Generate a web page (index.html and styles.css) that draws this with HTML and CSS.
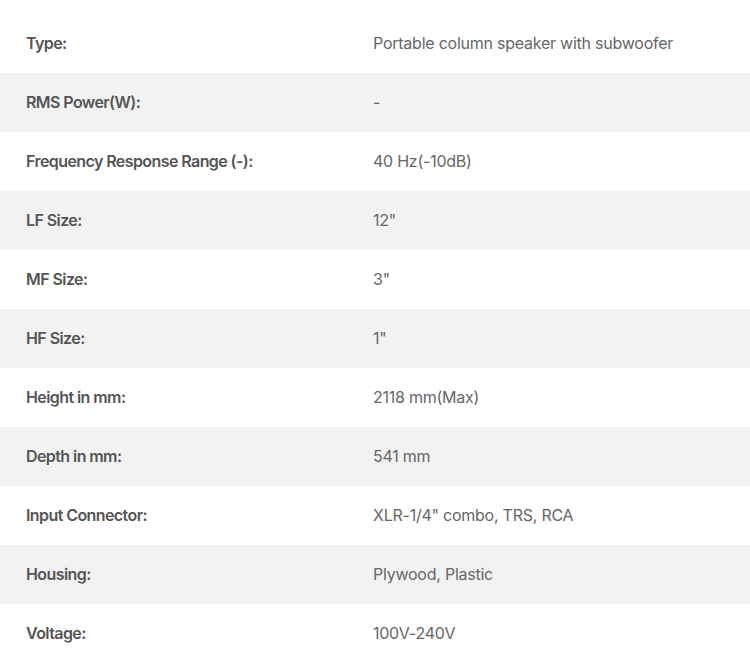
FILE: index.html
```html
<!DOCTYPE html>
<html>
<head>
<meta charset="utf-8">
<link rel="stylesheet" href="styles.css">
</head>
<body>
<table class="specs">
  <tbody>
    <tr><td class="label">Type:</td><td class="value">Portable column speaker with subwoofer</td></tr>
    <tr><td class="label">RMS Power(W):</td><td class="value">-</td></tr>
    <tr><td class="label">Frequency Response Range (-):</td><td class="value">40 Hz(-10dB)</td></tr>
    <tr><td class="label">LF Size:</td><td class="value">12"</td></tr>
    <tr><td class="label">MF Size:</td><td class="value">3"</td></tr>
    <tr><td class="label">HF Size:</td><td class="value">1"</td></tr>
    <tr><td class="label">Height in mm:</td><td class="value">2118 mm(Max)</td></tr>
    <tr><td class="label">Depth in mm:</td><td class="value">541 mm</td></tr>
    <tr><td class="label">Input Connector:</td><td class="value">XLR-1/4" combo, TRS, RCA</td></tr>
    <tr><td class="label">Housing:</td><td class="value">Plywood, Plastic</td></tr>
    <tr><td class="label">Voltage:</td><td class="value">100V-240V</td></tr>
  </tbody>
</table>
</body>
</html>
```

FILE: styles.css
```css
html, body {
  margin: 0;
  padding: 0;
  background: #fff;
}
body {
  padding-top: 14px;
  font-family: Inter, "Noto Sans", sans-serif;
  font-size: 16px;
}
.specs {
  width: 100%;
  border-collapse: collapse;
}
.specs tr {
  height: 59px;
}
.specs tr:nth-child(even) {
  background: #f2f2f2;
}
.specs td {
  padding: 0 0 2px 0;
  vertical-align: middle;
}
.label {
  width: 347px;
  padding-left: 26px !important;
  font-weight: 600;
  color: #555;
  letter-spacing: -0.58px;
}
.value {
  color: #666;
  font-weight: 400;
  letter-spacing: -0.24px;
}
```
